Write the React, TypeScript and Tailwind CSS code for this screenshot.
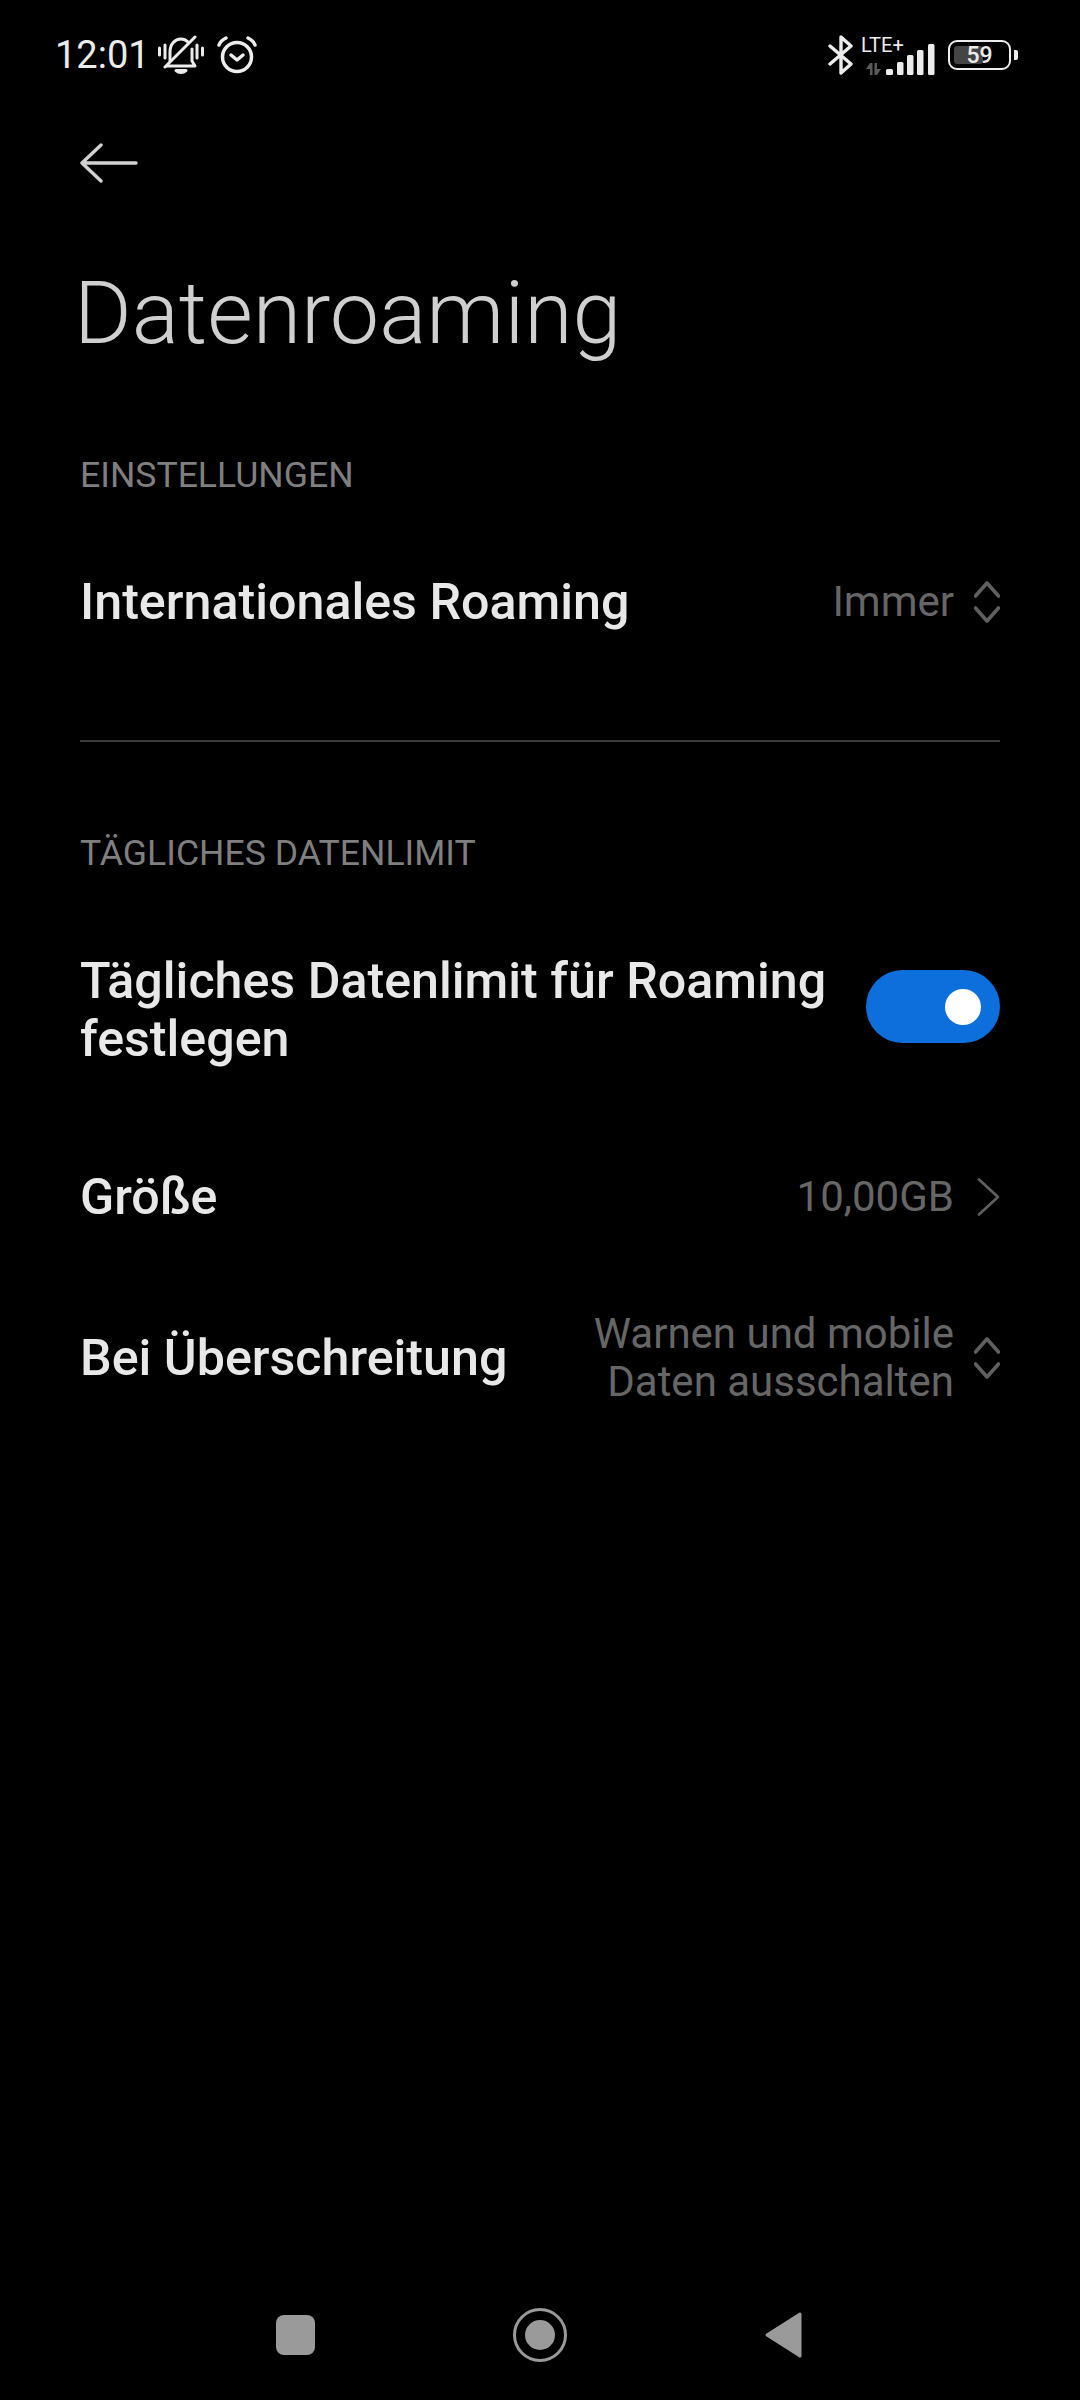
const font = { fontFamily: "Roboto, sans-serif" };

function BellOff() {
  return (
    <svg width="46" height="40" viewBox="0 0 46 40" fill="none" stroke="#ececec" strokeWidth="3" strokeLinecap="round" strokeLinejoin="round">
      <path d="M1.500 13v7M7 10v13M39 10v13M44.500 13v7" />
      <path d="M12 26V17C12 9 17 4 23 4c3 0 5 1 7 3M34 14v12l3 5H9" />
      <path d="M37 2 7 32" />
      <path d="M18 35.500c3 2.500 7 2.500 10 0z" fill="#ececec" />
    </svg>
  );
}

function Alarm() {
  return (
    <svg width="40" height="38" viewBox="0 0 40 38" fill="none" stroke="#ececec" strokeWidth="3.500" strokeLinecap="round" strokeLinejoin="round">
      <circle cx="20" cy="21" r="14.500" />
      <path d="M2 9c1-3 3-5 7-7M38 9c-1-3-3-5-7-7" />
      <path d="M14 19l6 5 6-5" />
    </svg>
  );
}

function Bluetooth() {
  return (
    <svg width="26" height="40" viewBox="0 0 26 40" fill="none" stroke="#ececec" strokeWidth="3.400" strokeLinecap="round" strokeLinejoin="round">
      <path d="M2 11l21 18-10 9V2l10 9L2 29" />
    </svg>
  );
}

function Signal() {
  return (
    <svg width="50" height="31" viewBox="0 0 50 31" fill="#ececec">
      <rect x="0" y="25" width="7" height="6" rx="1.500" />
      <rect x="11" y="18" width="6.500" height="13" rx="1.500" />
      <rect x="21" y="11" width="6.500" height="20" rx="1.500" />
      <rect x="31" y="6" width="6.500" height="25" rx="1.500" />
      <rect x="42" y="0" width="6.500" height="31" rx="1.500" />
    </svg>
  );
}

function DataArrows() {
  return (
    <svg width="15" height="12" viewBox="0 0 15 12" fill="#5a5a5a">
      <path d="M0 6l4-6h2.500v12H4V6z" />
      <path d="M15 6l-4 6H8.500V0H11v6z" />
    </svg>
  );
}

function Battery() {
  return (
    <div className="flex items-center gap-[3px]">
      <div className="relative flex h-[30px] w-[63px] items-center rounded-[9px] border-[2.5px] border-[#ececec] p-[4px]">
        <div className="h-full w-[29px] rounded-[3px] bg-[#444444]" />
        <span className="absolute inset-0 flex items-center justify-center text-[23px] font-medium leading-none text-[#ececec]">59</span>
      </div>
      <div className="h-[10px] w-[4px] rounded-r-[2px] bg-[#ececec]" />
    </div>
  );
}

function UpDown() {
  return (
    <svg width="26" height="42" viewBox="0 0 26 42" fill="none" stroke="#5f5f5f" strokeWidth="3.600" strokeLinecap="round" strokeLinejoin="round" className="shrink-0">
      <path d="M1.500 15 13 2l11.500 13M1.500 27 13 40l11.500-13" />
    </svg>
  );
}

function ChevronRight() {
  return (
    <svg width="26" height="38" viewBox="0 0 26 38" fill="none" stroke="#5f5f5f" strokeWidth="2.600" strokeLinecap="round" strokeLinejoin="round" className="shrink-0">
      <path d="M5 1.500 24 19 5 36.500" />
    </svg>
  );
}

function SectionLabel({ children }: { children: string }) {
  return <p className="text-[35.6px] leading-[42px] text-[#7f7f7f]">{children}</p>;
}

function RowTitle({ children }: { children: React.ReactNode }) {
  return <p className="text-[50.2px] font-medium leading-[58px] text-[#e8e8e8]">{children}</p>;
}

export default function App() {
  return (
    <div className="flex h-[2400px] w-[1080px] flex-col bg-black" style={font}>
      {/* status bar */}
      <div className="flex h-[110px] shrink-0 items-center justify-between pl-[55px] pr-[62px]">
        <div className="flex items-center">
          <span className="text-[38px] leading-none text-[#ececec]">12:01</span>
          <span className="ml-[8px]"><BellOff /></span>
          <span className="ml-[13px]"><Alarm /></span>
        </div>
        <div className="flex items-center">
          <Bluetooth />
          <div className="ml-[7px] flex flex-col">
            <span className="text-[20px] leading-[20px] text-[#ececec]">LTE+</span>
            <div className="-mt-[11px] flex items-end">
              <span className="ml-[5px] mr-[5px]"><DataArrows /></span>
              <Signal />
            </div>
          </div>
          <span className="ml-[12px]"><Battery /></span>
        </div>
      </div>

      {/* back */}
      <div className="mt-[28px] flex h-[50px] items-center pl-[80px]">
        <svg width="58" height="40" viewBox="0 0 58 40" fill="none" stroke="#d2d2d2" strokeWidth="3.400" strokeLinecap="round" strokeLinejoin="round">
          <path d="M2 20h54M21 2 2 20l19 18" />
        </svg>
      </div>

      <h1 className="mt-[75px] pl-[74px] text-[88px] font-light leading-[100px] text-[#cfcfcf]">Datenroaming</h1>

      <div className="mt-[91px] px-[80px]">
        <SectionLabel>EINSTELLUNGEN</SectionLabel>
      </div>

      <div className="mt-[77px] flex items-center justify-between px-[80px]">
        <RowTitle>Internationales Roaming</RowTitle>
        <div className="flex items-center gap-[20px]">
          <span className="text-[42px] leading-[48px] text-[#666666]">Immer</span>
          <UpDown />
        </div>
      </div>

      <div className="mx-[80px] mt-[109px] h-[2px] bg-[#3a3a3a]" />

      <div className="mt-[90px] px-[80px]">
        <SectionLabel>TÄGLICHES DATENLIMIT</SectionLabel>
      </div>

      <div className="mt-[78px] flex items-center justify-between px-[80px]">
        <RowTitle>
          Tägliches Datenlimit für Roaming
          <br />
          festlegen
        </RowTitle>
        <div className="mb-[7px] flex h-[73px] w-[134px] items-center justify-end rounded-full bg-[#0d6fdc] pr-[19px]">
          <div className="h-[36px] w-[36px] rounded-full bg-white" />
        </div>
      </div>

      <div className="mt-[100px] flex items-center justify-between px-[80px]">
        <RowTitle>Größe</RowTitle>
        <div className="flex items-center gap-[20px]">
          <span className="text-[42px] leading-[48px] text-[#666666]">10,00GB</span>
          <ChevronRight />
        </div>
      </div>

      <div className="mt-[84px] flex items-center justify-between px-[80px]">
        <RowTitle>Bei Überschreitung</RowTitle>
        <div className="flex items-center gap-[20px]">
          <span className="text-right text-[42px] leading-[48px] text-[#666666]">
            Warnen und mobile
            <br />
            Daten ausschalten
          </span>
          <UpDown />
        </div>
      </div>

      {/* nav bar */}
      <div className="mt-auto mb-[38px] flex items-center justify-between pl-[276px] pr-[278px]">
        <div className="h-[40px] w-[39px] rounded-[8px] bg-[#9a9a9a]" />
        <div className="flex h-[54px] w-[54px] items-center justify-center rounded-full border-[3px] border-[#9a9a9a]">
          <div className="h-[30px] w-[30px] rounded-full bg-[#9a9a9a]" />
        </div>
        <svg width="37" height="46" viewBox="0 0 37 46" fill="#9a9a9a" stroke="#9a9a9a" strokeWidth="3" strokeLinejoin="round">
          <path d="M35 2v42L2 23z" />
        </svg>
      </div>
    </div>
  );
}
